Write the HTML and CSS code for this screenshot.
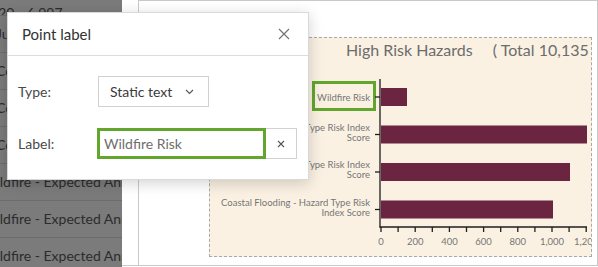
FILE: index.html
```html
<!DOCTYPE html>
<html>
<head>
    <meta charset="UTF-8">
    <title>Point label</title>
    <link rel="stylesheet" href="styles.css">
</head>
<body>
    <div class="screen">
        <aside class="list">
            <div class="row first"><span>2020 - 6,997</span></div>
            <div class="row"><span>Jurisdiction - Expected Annual</span></div>
            <div class="row"><span>Coastal Flooding - Expected</span></div>
            <div class="row"><span>Coastal Flooding - Expected</span></div>
            <div class="row"><span>Coastal Flooding - Expected</span></div>
            <div class="row"><span class="cut">Wildfire - Expected Annual Loss</span></div>
            <div class="row"><span class="cut">Wildfire - Expected Annual Loss</span></div>
            <div class="row"><span class="cut">Wildfire - Expected Annual Loss</span></div>
        </aside>
        <div class="gutter"></div>
        <main class="canvas">
            <div class="chart">
                <div class="chart-title">
                    <span>High Risk Hazards</span>
                    <span class="total">( Total 10,135 )</span>
                </div>
                <svg class="plot" width="382" height="194" viewBox="0 0 382 194">
                    <g class="cats" text-anchor="end">
                        <text x="160" y="38.5">Wildfire Risk</text>
                        <text x="160" y="69">Hurricane - Hazard Type Risk Index</text>
                        <text x="160" y="79">Score</text>
                        <text x="160" y="106">Heat Wave - Hazard Type Risk Index</text>
                        <text x="160" y="116">Score</text>
                        <text x="160" y="143.5">Coastal Flooding - Hazard Type Risk</text>
                        <text x="160" y="153.5">Index Score</text>
                    </g>
                    <rect class="pick" x="103.5" y="20.5" width="61" height="27"/>
                    <g class="bars">
                        <rect x="171" y="26" width="26" height="18"/>
                        <rect x="171" y="63.5" width="206" height="18"/>
                        <rect x="171" y="101" width="189" height="18"/>
                        <rect x="171" y="138.5" width="172" height="18"/>
                    </g>
                    <g class="axis">
                        <line x1="170" y1="17" x2="170" y2="165.5"/>
                        <line x1="169.5" y1="165" x2="377" y2="165"/>
                        <line x1="165" y1="35" x2="170" y2="35"/>
                        <line x1="165" y1="72.5" x2="170" y2="72.5"/>
                        <line x1="165" y1="110" x2="170" y2="110"/>
                        <line x1="165" y1="147.5" x2="170" y2="147.5"/>
                        <line x1="171" y1="165" x2="171" y2="170"/>
                        <line x1="188.1" y1="165" x2="188.1" y2="170"/>
                        <line x1="205.2" y1="165" x2="205.2" y2="170"/>
                        <line x1="222.3" y1="165" x2="222.3" y2="170"/>
                        <line x1="239.4" y1="165" x2="239.4" y2="170"/>
                        <line x1="256.5" y1="165" x2="256.5" y2="170"/>
                        <line x1="273.6" y1="165" x2="273.6" y2="170"/>
                        <line x1="290.7" y1="165" x2="290.7" y2="170"/>
                        <line x1="307.8" y1="165" x2="307.8" y2="170"/>
                        <line x1="324.9" y1="165" x2="324.9" y2="170"/>
                        <line x1="342" y1="165" x2="342" y2="170"/>
                        <line x1="359.1" y1="165" x2="359.1" y2="170"/>
                        <line x1="376.2" y1="165" x2="376.2" y2="170"/>
                    </g>
                    <g class="ticks" text-anchor="middle">
                        <text x="171" y="182.5">0</text>
                        <text x="205.2" y="182.5">200</text>
                        <text x="239.4" y="182.5">400</text>
                        <text x="273.6" y="182.5">600</text>
                        <text x="307.8" y="182.5">800</text>
                        <text x="342" y="182.5">1,000</text>
                        <text x="376.2" y="182.5">1,200</text>
                    </g>
                </svg>
            </div>
        </main>
    </div>

    <div class="dialog">
        <div class="dialog-head">
            <span>Point label</span>
            <svg class="close" width="12" height="12" viewBox="0 0 12 12">
                <path d="M1 1 L11 11 M11 1 L1 11"/>
            </svg>
        </div>
        <div class="dialog-body">
            <label>Type:</label>
            <div class="select">
                <span>Static text</span>
                <svg width="9" height="6" viewBox="0 0 9 6">
                    <path d="M1 1 L4.5 4.5 L8 1"/>
                </svg>
            </div>
            <label>Label:</label>
            <div class="field">
                <div class="input">Wildfire Risk</div>
                <div class="clear">
                    <svg width="8" height="8" viewBox="0 0 8 8">
                        <path d="M1 1 L7 7 M7 1 L1 7"/>
                    </svg>
                </div>
            </div>
        </div>
    </div>
</body>
</html>
```

FILE: styles.css
```css
* {
    box-sizing: border-box;
}
body {
    margin: 0;
    width: 598px;
    height: 267px;
    overflow: hidden;
    position: relative;
    background: #fff;
    font-family: Lato, "Open Sans", sans-serif;
}
.screen {
    display: flex;
    align-items: flex-start;
    height: 267px;
}
.list {
    width: 122px;
    height: 267px;
    background: #7b7b7b;
    overflow: hidden;
}
.row {
    height: 37px;
    border-bottom: 1px solid #6c6c6c;
    font-size: 14px;
    line-height: 36px;
    color: #2c2c2c;
    white-space: nowrap;
    overflow: hidden;
}
.row.first {
    height: 16px;
    line-height: 18px;
    padding-top: 4px;
}
.row span {
    display: block;
    margin-left: -4px;
}
.row.first span {
    margin-left: -18px;
}
.row .cut {
    margin-left: -18px;
}
.gutter {
    width: 17px;
    height: 266px;
    border-right: 1px solid #c9c9c9;
    border-bottom: 1px solid #c9c9c9;
}
.canvas {
    flex: 1;
    height: 266px;
    border-top: 1px solid #c9c9c9;
    border-right: 1px solid #c9c9c9;
    border-bottom: 1px solid #c9c9c9;
    padding: 36px 0 0 70px;
    overflow: hidden;
}
.chart {
    width: 383px;
    background: #faf1e3;
    border: 1px dashed #a9a9a9;
    overflow: hidden;
}
.chart-title {
    height: 24px;
    line-height: 24px;
    padding-left: 136px;
    font-size: 16px;
    color: #6c6c6c;
    white-space: nowrap;
}
.chart-title .total {
    margin-left: 16px;
}
.plot {
    display: block;
    font-family: Lato, sans-serif;
}
.cats text, .ticks text {
    font-size: 9.5px;
    fill: #767676;
}
.pick {
    fill: none;
    stroke: #62a62d;
    stroke-width: 3;
}
.bars rect {
    fill: #6b2540;
}
.axis line {
    stroke: #1e1e1e;
    stroke-width: 1.3;
}

.dialog {
    position: absolute;
    left: 7px;
    top: 12px;
    width: 302px;
    height: 168px;
    background: #fff;
    border: 1px solid #d9d9d9;
    box-shadow: 0 3px 14px rgba(0, 0, 0, 0.18);
}
.dialog-head {
    height: 43px;
    border-bottom: 1px solid #dcdcdc;
    display: flex;
    align-items: center;
    justify-content: space-between;
    padding: 0 18px 0 14px;
    font-size: 15px;
    color: #323232;
}
.close path {
    stroke: #707070;
    stroke-width: 1.1;
    fill: none;
}
.dialog-body {
    display: grid;
    grid-template-columns: 80px auto;
    grid-auto-rows: 31px;
    row-gap: 21px;
    padding: 20px 10px 0;
    align-items: center;
}
.dialog-body label {
    font-size: 14px;
    color: #4a4a4a;
}
.select {
    width: 111px;
    height: 31px;
    border: 1px solid #d2d2d2;
    display: flex;
    align-items: center;
    justify-content: space-between;
    padding: 0 14px 0 11px;
    font-size: 14px;
    color: #3a3a3a;
}
.select path, .clear path {
    stroke: #555;
    stroke-width: 1.1;
    fill: none;
}
.field {
    display: flex;
    height: 31px;
    margin-left: -1px;
}
.input {
    width: 169px;
    height: 31px;
    border: 3px solid #62a62d;
    padding-left: 4px;
    line-height: 25px;
    font-size: 14px;
    color: #6e6e6e;
}
.clear {
    width: 31px;
    height: 31px;
    border: 1px solid #d2d2d2;
    border-left: 0;
    display: flex;
    align-items: center;
    justify-content: center;
}
```
